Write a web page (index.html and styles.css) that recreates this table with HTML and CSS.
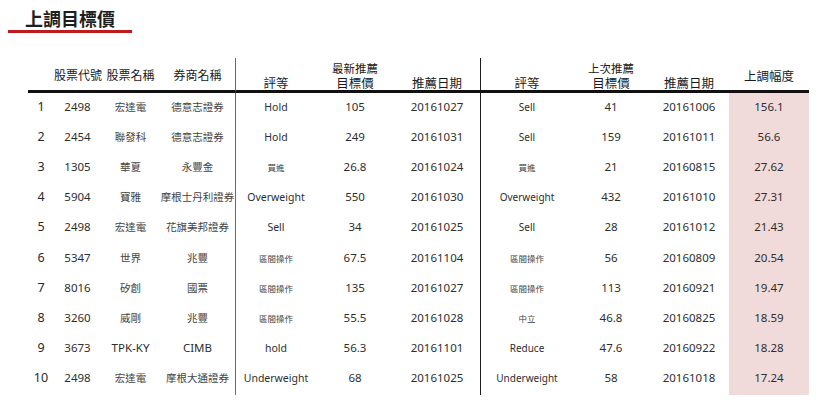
FILE: index.html
```html
<!DOCTYPE html>
<html lang="zh-Hant">
<head>
<meta charset="utf-8">
<title>上調目標價</title>
<link rel="stylesheet" href="styles.css">
</head>
<body>
<h1 class="title">上調目標價</h1>
<table class="rank">
  <colgroup>
    <col class="c-idx"><col class="c-code"><col class="c-name"><col class="c-broker">
    <col class="c-rate"><col class="c-target"><col class="c-date">
    <col class="c-rate2"><col class="c-target2"><col class="c-date2"><col class="c-pct">
  </colgroup>
  <thead>
    <tr>
      <th></th>
      <th class="mid">股票代號</th>
      <th class="mid">股票名稱</th>
      <th class="mid sep">券商名稱</th>
      <th class="bot">評等</th>
      <th class="bot"><span class="sup">最新推薦</span><span class="sub">目標價</span></th>
      <th class="bot sep2">推薦日期</th>
      <th class="bot">評等</th>
      <th class="bot"><span class="sup">上次推薦</span><span class="sub">目標價</span></th>
      <th class="bot">推薦日期</th>
      <th class="mid pcth">上調幅度</th>
    </tr>
  </thead>
  <tbody>
    <tr><td class="idx">1</td><td>2498</td><td class="zh">宏達電</td><td class="zh sep">德意志證券</td><td class="en">Hold</td><td>105</td><td class="sep2">20161027</td><td class="en r">Sell</td><td>41</td><td>20161006</td><td class="pct">156.1</td></tr>
    <tr><td class="idx">2</td><td>2454</td><td class="zh">聯發科</td><td class="zh sep">德意志證券</td><td class="en">Hold</td><td>249</td><td class="sep2">20161031</td><td class="en r">Sell</td><td>159</td><td>20161011</td><td class="pct">56.6</td></tr>
    <tr><td class="idx">3</td><td>1305</td><td class="zh">華夏</td><td class="zh sep">永豐金</td><td class="zs">買進</td><td>26.8</td><td class="sep2">20161024</td><td class="zs">買進</td><td>21</td><td>20160815</td><td class="pct">27.62</td></tr>
    <tr><td class="idx">4</td><td>5904</td><td class="zh">寶雅</td><td class="zh sep">摩根士丹利證券</td><td class="en">Overweight</td><td>550</td><td class="sep2">20161030</td><td class="en r">Overweight</td><td>432</td><td>20161010</td><td class="pct">27.31</td></tr>
    <tr><td class="idx">5</td><td>2498</td><td class="zh">宏達電</td><td class="zh sep">花旗美邦證券</td><td class="en">Sell</td><td>34</td><td class="sep2">20161025</td><td class="en r">Sell</td><td>28</td><td>20161012</td><td class="pct">21.43</td></tr>
    <tr><td class="idx">6</td><td>5347</td><td class="zh">世界</td><td class="zh sep">兆豐</td><td class="zs">區間操作</td><td>67.5</td><td class="sep2">20161104</td><td class="zs">區間操作</td><td>56</td><td>20160809</td><td class="pct">20.54</td></tr>
    <tr><td class="idx">7</td><td>8016</td><td class="zh">矽創</td><td class="zh sep">國票</td><td class="zs">區間操作</td><td>135</td><td class="sep2">20161027</td><td class="zs">區間操作</td><td>113</td><td>20160921</td><td class="pct">19.47</td></tr>
    <tr><td class="idx">8</td><td>3260</td><td class="zh">威剛</td><td class="zh sep">兆豐</td><td class="zs">區間操作</td><td>55.5</td><td class="sep2">20161028</td><td class="zs">中立</td><td>46.8</td><td>20160825</td><td class="pct">18.59</td></tr>
    <tr><td class="idx">9</td><td>3673</td><td>TPK-KY</td><td class="sep">CIMB</td><td class="en">hold</td><td>56.3</td><td class="sep2">20161101</td><td class="en r">Reduce</td><td>47.6</td><td>20160922</td><td class="pct">18.28</td></tr>
    <tr><td class="idx">10</td><td>2498</td><td class="zh">宏達電</td><td class="zh sep">摩根大通證券</td><td class="en">Underweight</td><td>68</td><td class="sep2">20161025</td><td class="en r">Underweight</td><td>58</td><td>20161018</td><td class="pct">17.24</td></tr>
  </tbody>
</table>
</body>
</html>
```

FILE: styles.css
```css
html, body {
  margin: 0;
  padding: 0;
  background: #ffffff;
}

body {
  font-family: "Noto Sans", "Noto Sans CJK TC", sans-serif;
  color: #333333;
}

.title {
  margin: 6px 0 0 8px;
  width: 107px;
  padding-left: 17px;
  font-family: "Noto Sans CJK TC", sans-serif;
  font-size: 18px;
  line-height: 24px;
  font-weight: 700;
  color: #1e1e1e;
  border-bottom: 3px solid #bf1a1f;
}

.rank {
  margin: 25px 0 0 28px;
  width: 781px;
  table-layout: fixed;
  border-collapse: separate;
  border-spacing: 0;
}

.c-idx { width: 26px; }
.c-code { width: 47px; }
.c-name { width: 59px; }
.c-broker { width: 76px; }
.c-rate { width: 80px; }
.c-target { width: 78px; }
.c-date { width: 87px; }
.c-rate2 { width: 92px; }
.c-target2 { width: 76px; }
.c-date2 { width: 80px; }
.c-pct { width: 80px; }

.rank th {
  height: 32px;
  padding: 0;
  font-family: "Noto Sans CJK TC", sans-serif;
  font-size: 12px;
  font-weight: 400;
  line-height: 15px;
  color: #1a1a1a;
  text-align: center;
  white-space: nowrap;
  border-bottom: 3px solid #111111;
}

.rank th.mid {
  vertical-align: middle;
}

.rank th.bot {
  vertical-align: bottom;
  font-size: 12.5px;
}

.rank th.pcth {
  padding-top: 3px;
  height: 29px;
  font-size: 12.5px;
}

.rank .sup {
  display: block;
  font-size: 11.5px;
  line-height: 14px;
}

.rank .sub {
  display: block;
  line-height: 15px;
}

.rank td {
  height: 27.2px;
  padding: 0 0 3px 0;
  font-size: 11.5px;
  line-height: 14px;
  text-align: center;
  vertical-align: middle;
  white-space: nowrap;
  color: #2e2e2e;
}

.rank .sep {
  border-right: 1px solid #6a6a6a;
}

.rank .sep2 {
  border-right: 1px solid #1c1c1c;
}

.rank td.idx {
  font-size: 12.5px;
  color: #2a2a2a;
}

.rank td.zh {
  font-family: "Noto Sans CJK TC", sans-serif;
  font-size: 10.5px;
  color: #444444;
}

.rank td.zs {
  font-family: "Noto Sans CJK TC", sans-serif;
  font-size: 8.5px;
  color: #444444;
}

.rank td.en {
  font-size: 10.5px;
}

.rank td.en.r {
  font-size: 10px;
}

.rank td.pct {
  background: #f1dbda;
}
```
